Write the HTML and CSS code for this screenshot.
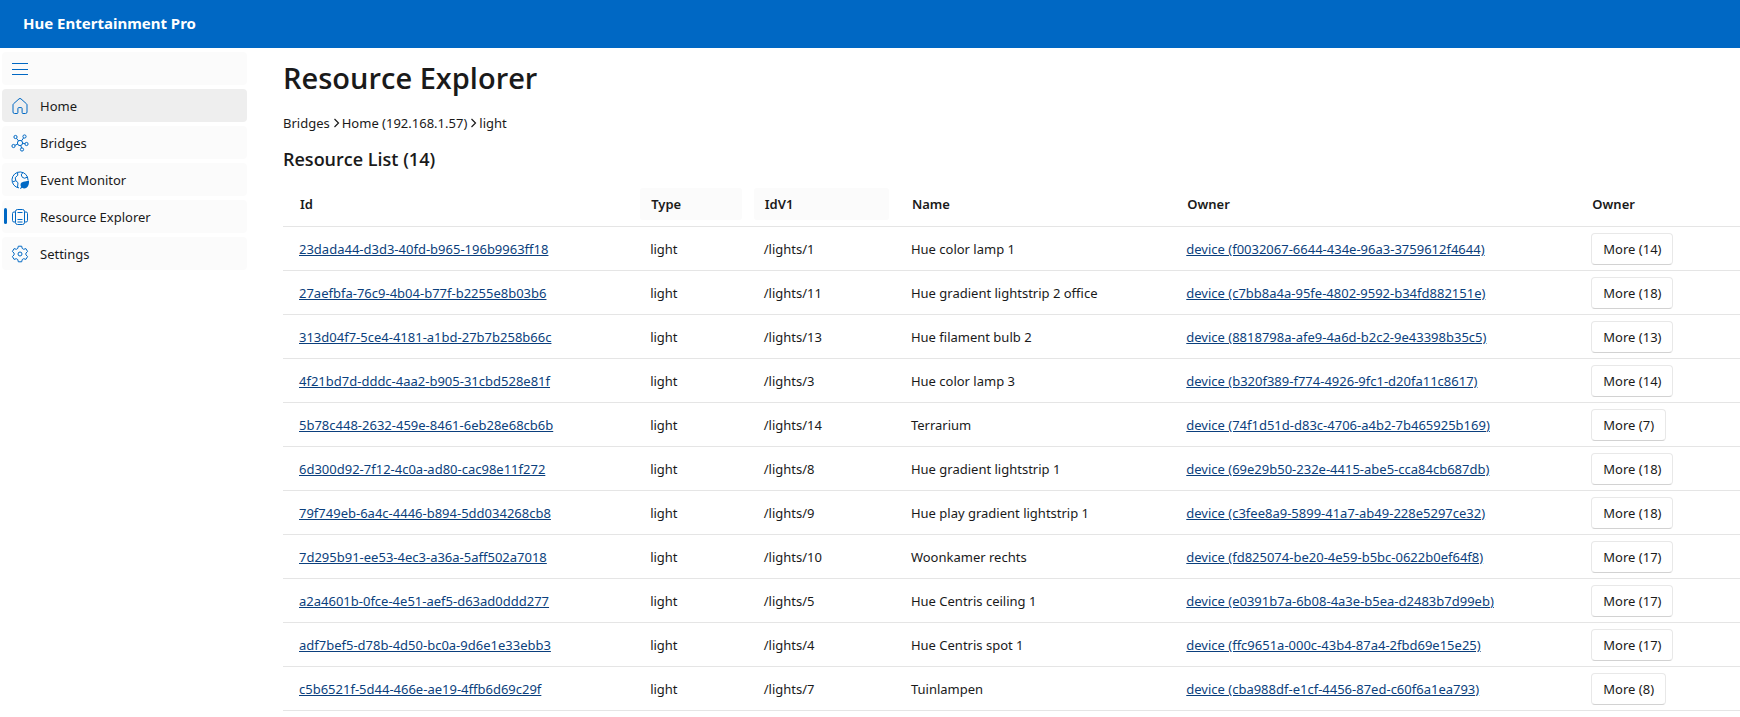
FILE: index.html
```html
<!DOCTYPE html>
<html lang="en">
<head>
<meta charset="utf-8">
<title>Hue Entertainment Pro</title>
<link rel="stylesheet" href="styles.css">
</head>
<body>
<header class="topbar"><span class="brand">Hue Entertainment Pro</span></header>
<div class="layout">
  <nav class="sidebar" aria-label="Main">
    <button class="nav-item" type="button" aria-label="Toggle navigation">
      <svg class="icon" viewBox="0 0 20 20"><path d="M2 4.5h16M2 10.5h16M2 15.5h16"/></svg>
    </button>
    <a class="nav-item nav-hover" href="#home">
      <svg class="icon" viewBox="0 0 20 20"><path d="M9 2.900a1.500 1.500 0 0 1 2 0l5.500 4.900a1.500 1.500 0 0 1 .5 1.100V16a1.500 1.500 0 0 1-1.500 1.500H13a.9.9 0 0 1-.9-.9V12.500a.9.9 0 0 0-.9-.9H8.800a.9.900 0 0 0-.9.900v4.100a.9.9 0 0 1-.9.900H4.500A1.500 1.500 0 0 1 3 16V8.900a1.500 1.500 0 0 1 .5-1.100z"/></svg>
      <span>Home</span>
    </a>
    <a class="nav-item" href="#bridges">
      <svg class="icon" viewBox="0 0 20 20"><circle cx="10" cy="10" r="2.600"/><circle cx="5.500" cy="4" r="1.600"/><circle cx="14.500" cy="3.500" r="1.600"/><circle cx="3.500" cy="13" r="1.600"/><circle cx="16.500" cy="11" r="1.600"/><circle cx="12" cy="16.500" r="1.600"/><path d="M6.500 5.300l2 2.600M13.600 4.900l-2.100 3M5 12.300l2.600-1.200M12.600 10.200l2.300.4M10.800 12.500l.7 2.500"/></svg>
      <span>Bridges</span>
    </a>
    <a class="nav-item" href="#events">
      <svg class="icon" viewBox="0 0 20 20"><path d="M9 17.900A8 8 0 1 1 18 10M7.500 2.500l.3 2.700-2.600 2.500.6 3-3.200 1.300M5.800 10.700l2.200 2-.5 4.700M12.800 2.600l-1.600 2.300 1.200 2.500 2.200.8 2.800-1"/><path class="solid" d="M19 10.500c-3.500 1.200-8.500.5-8.500 4.500 0 .8.300 1.500.7 2L10 18.300l.7.7 1.300-1.200c3.500 1.800 7.500-.6 7-7.300z"/></svg>
      <span>Event Monitor</span>
    </a>
    <a class="nav-item nav-active" href="#resources" aria-current="page">
      <svg class="icon" viewBox="0 0 20 20"><rect x="5.500" y="2.500" width="9" height="15" rx="2"/><path d="M5.500 5H4a1.500 1.500 0 0 0-1.500 1.500v7A1.500 1.500 0 0 0 4 15h1.500M14.500 5H16a1.500 1.500 0 0 1 1.500 1.500v7A1.500 1.500 0 0 1 16 15h-1.500M7.500 5.500h5M7.500 12.500h5M7.500 15h5"/></svg>
      <span>Resource Explorer</span>
    </a>
    <a class="nav-item" href="#settings">
      <svg class="icon" viewBox="0 0 20 20"><circle cx="10" cy="10" r="2"/><path d="M8.300 2.200h3.400l.5 2.200 1.500.9 2.200-.7 1.700 2.900-1.700 1.600v1.800l1.700 1.600-1.700 2.900-2.200-.7-1.500.9-.5 2.200H8.300l-.5-2.200-1.500-.9-2.200.7-1.700-2.900 1.700-1.600V9.100L2.400 7.500l1.700-2.900 2.200.7 1.500-.9z"/></svg>
      <span>Settings</span>
    </a>
  </nav>
  <main class="content">
    <h1 class="title">Resource Explorer</h1>
    <nav class="crumbs" aria-label="Breadcrumb">
      <a href="#bridges">Bridges</a>
      <svg class="chevron" viewBox="0 0 12 12"><path d="M4.500 2L8.500 6l-4 4"/></svg>
      <a href="#home">Home (192.168.1.57)</a>
      <svg class="chevron" viewBox="0 0 12 12"><path d="M4.500 2L8.500 6l-4 4"/></svg>
      <span>light</span>
    </nav>
    <h2 class="subtitle">Resource List (14)</h2>
    <table class="grid">
      <colgroup><col class="col-id"><col class="col-type"><col class="col-idv1"><col class="col-name"><col class="col-owner"><col></colgroup>
      <thead>
        <tr>
          <th scope="col"><span class="head">Id</span></th>
          <th scope="col"><button class="head head-sort" type="button">Type</button></th>
          <th scope="col"><button class="head head-sort" type="button">IdV1</button></th>
          <th scope="col"><span class="head">Name</span></th>
          <th scope="col"><span class="head">Owner</span></th>
          <th scope="col"><span class="head">Owner</span></th>
        </tr>
      </thead>
      <tbody>
        <tr><td><a href="#r1">23dada44-d3d3-40fd-b965-196b9963ff18</a></td><td>light</td><td>/lights/1</td><td>Hue color lamp 1</td><td><a href="#d1">device (f0032067-6644-434e-96a3-3759612f4644)</a></td><td><button class="more" type="button">More (14)</button></td></tr>
        <tr><td><a href="#r2">27aefbfa-76c9-4b04-b77f-b2255e8b03b6</a></td><td>light</td><td>/lights/11</td><td>Hue gradient lightstrip 2 office</td><td><a href="#d2">device (c7bb8a4a-95fe-4802-9592-b34fd882151e)</a></td><td><button class="more" type="button">More (18)</button></td></tr>
        <tr><td><a href="#r3">313d04f7-5ce4-4181-a1bd-27b7b258b66c</a></td><td>light</td><td>/lights/13</td><td>Hue filament bulb 2</td><td><a href="#d3">device (8818798a-afe9-4a6d-b2c2-9e43398b35c5)</a></td><td><button class="more" type="button">More (13)</button></td></tr>
        <tr><td><a href="#r4">4f21bd7d-dddc-4aa2-b905-31cbd528e81f</a></td><td>light</td><td>/lights/3</td><td>Hue color lamp 3</td><td><a href="#d4">device (b320f389-f774-4926-9fc1-d20fa11c8617)</a></td><td><button class="more" type="button">More (14)</button></td></tr>
        <tr><td><a href="#r5">5b78c448-2632-459e-8461-6eb28e68cb6b</a></td><td>light</td><td>/lights/14</td><td>Terrarium</td><td><a href="#d5">device (74f1d51d-d83c-4706-a4b2-7b465925b169)</a></td><td><button class="more" type="button">More (7)</button></td></tr>
        <tr><td><a href="#r6">6d300d92-7f12-4c0a-ad80-cac98e11f272</a></td><td>light</td><td>/lights/8</td><td>Hue gradient lightstrip 1</td><td><a href="#d6">device (69e29b50-232e-4415-abe5-cca84cb687db)</a></td><td><button class="more" type="button">More (18)</button></td></tr>
        <tr><td><a href="#r7">79f749eb-6a4c-4446-b894-5dd034268cb8</a></td><td>light</td><td>/lights/9</td><td>Hue play gradient lightstrip 1</td><td><a href="#d7">device (c3fee8a9-5899-41a7-ab49-228e5297ce32)</a></td><td><button class="more" type="button">More (18)</button></td></tr>
        <tr><td><a href="#r8">7d295b91-ee53-4ec3-a36a-5aff502a7018</a></td><td>light</td><td>/lights/10</td><td>Woonkamer rechts</td><td><a href="#d8">device (fd825074-be20-4e59-b5bc-0622b0ef64f8)</a></td><td><button class="more" type="button">More (17)</button></td></tr>
        <tr><td><a href="#r9">a2a4601b-0fce-4e51-aef5-d63ad0ddd277</a></td><td>light</td><td>/lights/5</td><td>Hue Centris ceiling 1</td><td><a href="#d9">device (e0391b7a-6b08-4a3e-b5ea-d2483b7d99eb)</a></td><td><button class="more" type="button">More (17)</button></td></tr>
        <tr><td><a href="#r10">adf7bef5-d78b-4d50-bc0a-9d6e1e33ebb3</a></td><td>light</td><td>/lights/4</td><td>Hue Centris spot 1</td><td><a href="#d10">device (ffc9651a-000c-43b4-87a4-2fbd69e15e25)</a></td><td><button class="more" type="button">More (17)</button></td></tr>
        <tr><td><a href="#r11">c5b6521f-5d44-466e-ae19-4ffb6d69c29f</a></td><td>light</td><td>/lights/7</td><td>Tuinlampen</td><td><a href="#d11">device (cba988df-e1cf-4456-87ed-c60f6a1ea793)</a></td><td><button class="more" type="button">More (8)</button></td></tr>
      </tbody>
    </table>
  </main>
</div>
</body>
</html>
```
FILE: styles.css
```css
* { box-sizing: border-box; }

body {
  margin: 0;
  background: #fff;
  color: #1a1a1a;
  font: 13px/20px "Segoe UI", "Noto Sans", "Open Sans", sans-serif;
}

button { font: inherit; color: inherit; border: 0; }

.topbar {
  display: flex;
  align-items: center;
  height: 48px;
  padding: 0 23px 2px;
  background: #0068c4;
  color: #fff;
}

.brand { font-size: 15px; font-weight: 700; }

.layout { display: flex; }

.sidebar {
  display: flex;
  flex-direction: column;
  flex: 0 0 247px;
  gap: 4px;
  padding: 4px 0 0 2px;
}

.nav-item {
  position: relative;
  display: flex;
  align-items: center;
  gap: 10px;
  height: 33px;
  padding: 0 8px;
  border-radius: 4px;
  background: #fbfbfb;
  color: #1a1a1a;
  text-decoration: none;
}

.nav-hover { background: #eee; }

.nav-active::before {
  content: "";
  position: absolute;
  left: 2px;
  top: 8px;
  width: 3px;
  height: 16px;
  border-radius: 2px;
  background: #0068c4;
}

.icon {
  width: 20px;
  height: 20px;
  fill: none;
  stroke: #0068c4;
  stroke-width: 1;
  stroke-linejoin: round;
}

.icon .solid { fill: #0068c4; stroke: none; }

.content {
  flex: 1;
  min-width: 0;
  padding: 8px 0 0 36px;
}

.title,
.subtitle {
  font-family: "Segoe UI", "Open Sans", "Noto Sans", sans-serif;
  font-weight: 600;
}

.title {
  margin: 0;
  font-size: 29px;
  line-height: 44px;
}

.crumbs {
  display: flex;
  align-items: center;
  margin-top: 13px;
}

.crumbs a { color: inherit; text-decoration: none; }

.chevron {
  width: 12px;
  height: 12px;
  fill: none;
  stroke: #1a1a1a;
  stroke-width: 1.2;
}

.subtitle {
  margin: 12px 0 0;
  font-size: 18px;
  line-height: 28px;
}

.grid {
  width: 100%;
  margin-top: 10px;
  border-collapse: separate;
  border-spacing: 0;
  table-layout: fixed;
}

.col-id { width: 24.1%; }
.col-type { width: 7.8%; }
.col-idv1 { width: 10.1%; }
.col-name { width: 18.9%; }
.col-owner { width: 27.8%; }

.grid th,
.grid td {
  height: 44px;
  border-bottom: 1px solid #e5e5e5;
  text-align: left;
  white-space: nowrap;
}

.grid th { padding: 0 6px 2px; font-weight: 600; }
.grid td { padding: 0 16px; }
.grid td a { color: #0b3f7d; }

.head {
  display: flex;
  align-items: center;
  width: 100%;
  height: 32px;
  padding: 0 11px;
  border-radius: 3px;
}

.head-sort { background: #fbfbfb; }

.more {
  height: 32px;
  padding: 0 11px;
  border: 1px solid #e8e8e8;
  border-bottom-color: #d2d2d2;
  border-radius: 4px;
  background: #fff;
}
```
